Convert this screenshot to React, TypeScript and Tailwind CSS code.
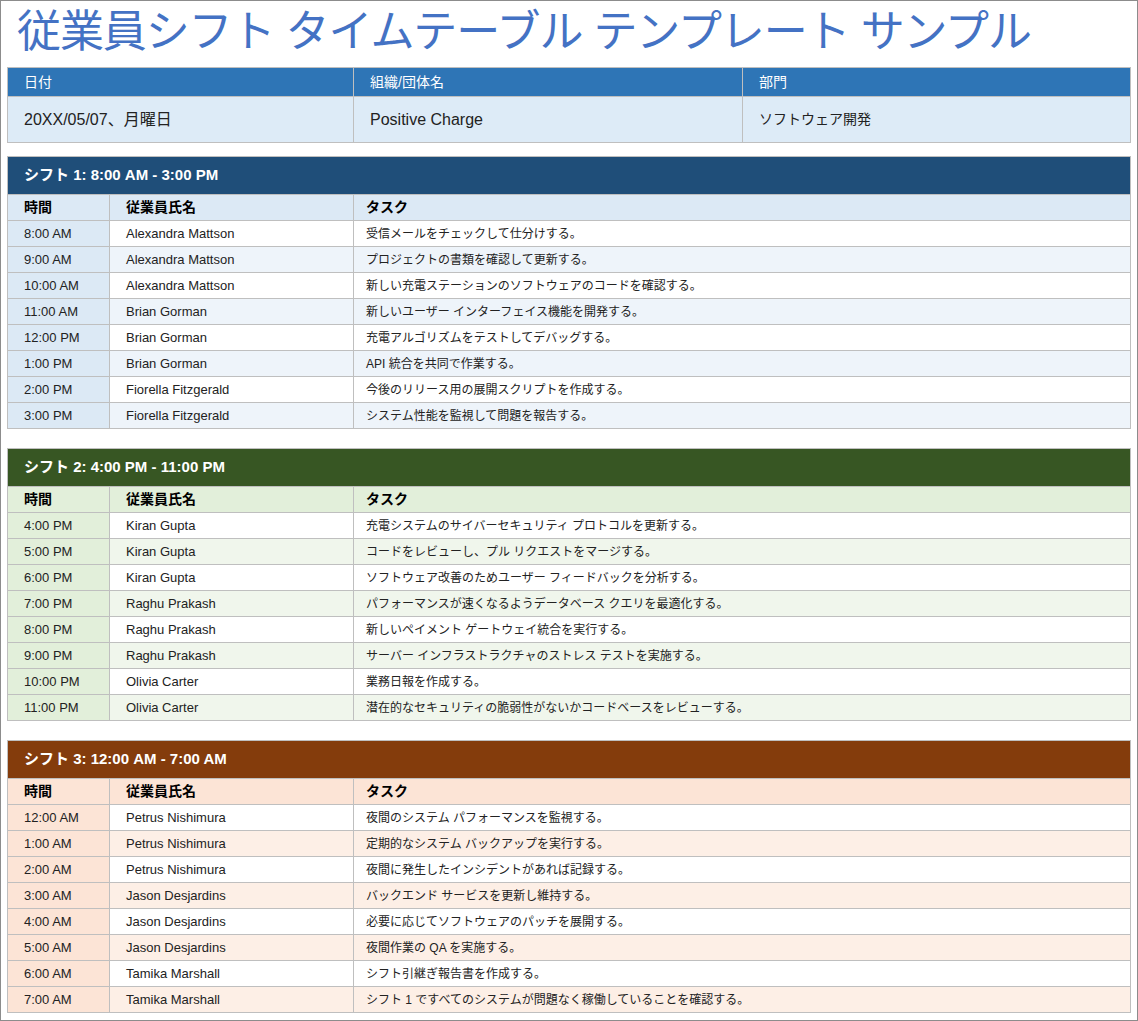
const F = { fontFamily: '"Liberation Sans", "Noto Sans CJK JP", sans-serif' };

type Row = [string, string, string];
const shifts: { title: string; head: string; colHead: string; time: string; alt: string; rows: Row[] }[] = [
  {
    title: "シフト 1: 8:00 AM - 3:00 PM",
    head: "bg-[#1f4e79]",
    colHead: "bg-[#dce9f5]",
    time: "bg-[#dce9f5]",
    alt: "bg-[#eef4fa]",
    rows: [
      ["8:00 AM", "Alexandra Mattson", "受信メールをチェックして仕分けする。"],
      ["9:00 AM", "Alexandra Mattson", "プロジェクトの書類を確認して更新する。"],
      ["10:00 AM", "Alexandra Mattson", "新しい充電ステーションのソフトウェアのコードを確認する。"],
      ["11:00 AM", "Brian Gorman", "新しいユーザー インターフェイス機能を開発する。"],
      ["12:00 PM", "Brian Gorman", "充電アルゴリズムをテストしてデバッグする。"],
      ["1:00 PM", "Brian Gorman", "API 統合を共同で作業する。"],
      ["2:00 PM", "Fiorella Fitzgerald", "今後のリリース用の展開スクリプトを作成する。"],
      ["3:00 PM", "Fiorella Fitzgerald", "システム性能を監視して問題を報告する。"],
    ],
  },
  {
    title: "シフト 2: 4:00 PM - 11:00 PM",
    head: "bg-[#375623]",
    colHead: "bg-[#e2efda]",
    time: "bg-[#e2efda]",
    alt: "bg-[#f0f6ec]",
    rows: [
      ["4:00 PM", "Kiran Gupta", "充電システムのサイバーセキュリティ プロトコルを更新する。"],
      ["5:00 PM", "Kiran Gupta", "コードをレビューし、プル リクエストをマージする。"],
      ["6:00 PM", "Kiran Gupta", "ソフトウェア改善のためユーザー フィードバックを分析する。"],
      ["7:00 PM", "Raghu Prakash", "パフォーマンスが速くなるようデータベース クエリを最適化する。"],
      ["8:00 PM", "Raghu Prakash", "新しいペイメント ゲートウェイ統合を実行する。"],
      ["9:00 PM", "Raghu Prakash", "サーバー インフラストラクチャのストレス テストを実施する。"],
      ["10:00 PM", "Olivia Carter", "業務日報を作成する。"],
      ["11:00 PM", "Olivia Carter", "潜在的なセキュリティの脆弱性がないかコードベースをレビューする。"],
    ],
  },
  {
    title: "シフト 3: 12:00 AM - 7:00 AM",
    head: "bg-[#843c0c]",
    colHead: "bg-[#fce4d6]",
    time: "bg-[#fce4d6]",
    alt: "bg-[#fdefe6]",
    rows: [
      ["12:00 AM", "Petrus Nishimura", "夜間のシステム パフォーマンスを監視する。"],
      ["1:00 AM", "Petrus Nishimura", "定期的なシステム バックアップを実行する。"],
      ["2:00 AM", "Petrus Nishimura", "夜間に発生したインシデントがあれば記録する。"],
      ["3:00 AM", "Jason Desjardins", "バックエンド サービスを更新し維持する。"],
      ["4:00 AM", "Jason Desjardins", "必要に応じてソフトウェアのパッチを展開する。"],
      ["5:00 AM", "Jason Desjardins", "夜間作業の QA を実施する。"],
      ["6:00 AM", "Tamika Marshall", "シフト引継ぎ報告書を作成する。"],
      ["7:00 AM", "Tamika Marshall", "シフト 1 ですべてのシステムが問題なく稼働していることを確認する。"],
    ],
  },
];

function Shift({ s }: { s: (typeof shifts)[number] }) {
  return (
    <div className="border border-[#bfbfbf]">
      <div className={`${s.head} h-[37px] flex items-center px-4 text-white font-bold text-[15px]`}>{s.title}</div>
      <div className={`grid grid-cols-[101px_244px_1fr] ${s.colHead} h-[26px] border-t border-[#bfbfbf] text-[14px] font-bold text-black`}>
        <div className="px-4 flex items-center">時間</div>
        <div className="px-4 flex items-center border-l border-[#bfbfbf]">従業員氏名</div>
        <div className="px-3 flex items-center border-l border-[#bfbfbf]">タスク</div>
      </div>
      {s.rows.map((r, i) => (
        <div key={i} className={`grid grid-cols-[101px_244px_1fr] h-[26px] border-t border-[#bfbfbf] text-[13px] text-[#222] ${i % 2 ? s.alt : "bg-white"}`}>
          <div className={`px-4 flex items-center ${s.time}`}>{r[0]}</div>
          <div className="px-4 flex items-center border-l border-[#bfbfbf]">{r[1]}</div>
          <div className="px-3 flex items-center border-l border-[#bfbfbf] text-[12px]">{r[2]}</div>
        </div>
      ))}
    </div>
  );
}

export default function App() {
  return (
    <div style={F} className="w-[1138px] h-[1021px] bg-white border border-[#8c8c8c] px-[6px] overflow-hidden">
      <h1 className="text-[#4472c4] text-[44px] leading-[62px] h-[66px] pl-[10px] tracking-tight">従業員シフト タイムテーブル テンプレート サンプル</h1>
      <div className="border border-[#bfbfbf]">
        <div className="grid grid-cols-[345px_389px_1fr] bg-[#2e75b6] text-white text-[14px] h-[28px]">
          <div className="px-4 flex items-center">日付</div>
          <div className="px-4 flex items-center border-l border-[#bfbfbf]">組織/団体名</div>
          <div className="px-4 flex items-center border-l border-[#bfbfbf]">部門</div>
        </div>
        <div className="grid grid-cols-[345px_389px_1fr] bg-[#ddebf7] text-[16px] text-[#222] h-[46px] border-t border-[#bfbfbf]">
          <div className="px-4 flex items-center">20XX/05/07、月曜日</div>
          <div className="px-4 flex items-center border-l border-[#bfbfbf]">Positive Charge</div>
          <div className="px-4 flex items-center border-l border-[#bfbfbf] text-[14px]">ソフトウェア開発</div>
        </div>
      </div>
      <div className="flex flex-col gap-[19px] mt-[13px]">
        {shifts.map((s) => (
          <Shift key={s.title} s={s} />
        ))}
      </div>
    </div>
  );
}
